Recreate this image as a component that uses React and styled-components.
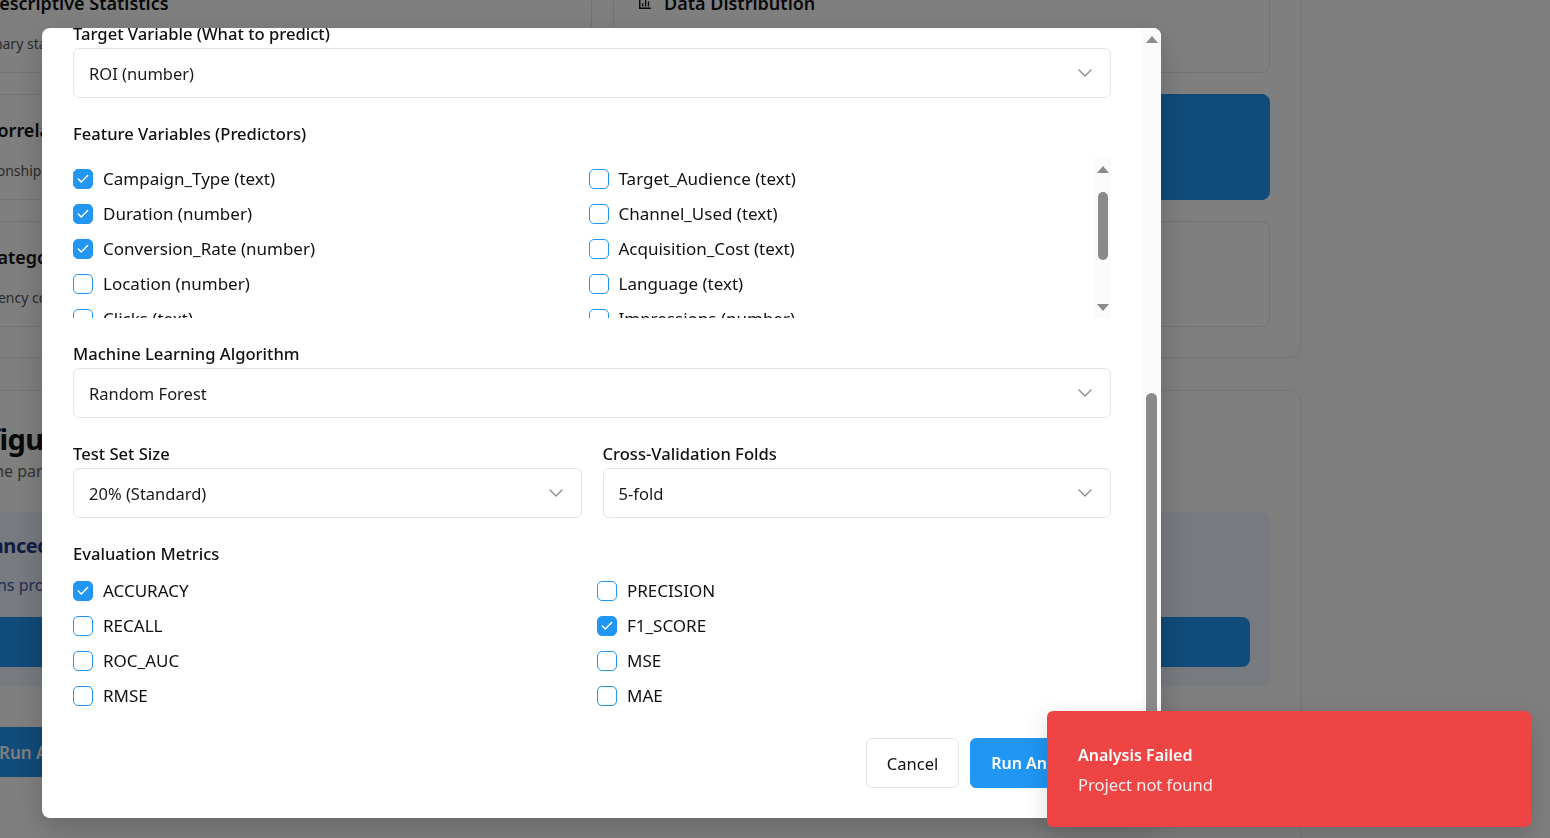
import React, { useLayoutEffect, useRef, useState } from "react";
import styled, { createGlobalStyle } from "styled-components";
import { Check, ChevronDown } from "lucide-react";

const GlobalStyle = createGlobalStyle`
  html, body {
    margin: 0;
    height: 100%;
    overflow: hidden;
    background: #fcfdfc;
    font-family: "Noto Sans", "Open Sans", Arial, sans-serif;
    color: #111;
  }
  * { box-sizing: border-box; }
`;

const BLUE = "#2196F3";
const ARROWS = 44; // two scroll arrow buttons of 22px

/* ---------- page behind the dialog ---------- */

const Page = styled.div`
  width: 1397px;
  /* the page is scrolled a little when the dialog opened */
  margin: -64px 0 0 -96px;
  display: flex;
  flex-direction: column;
  gap: 32px;
`;

const Panel = styled.section`
  background: #fff;
  border: 1px solid #eeeeee;
  border-radius: 12px;
  padding: 30px;
  box-shadow: 0 1px 3px rgba(0, 0, 0, 0.04);
`;

const CardGrid = styled.div`
  display: grid;
  grid-template-columns: 1fr 1fr;
  grid-auto-rows: 106px;
  gap: 21px;
`;

const TypeCard = styled.div`
  border: 1px solid ${(p) => (p.$filled ? BLUE : "#e8e8e8")};
  background: ${(p) => (p.$filled ? BLUE : "#fff")};
  color: ${(p) => (p.$filled ? "#fff" : "#111")};
  border-radius: 8px;
  padding: 23px 24px;
`;

const CardTitle = styled.div`
  display: flex;
  align-items: center;
  gap: 12px;
  font-size: 18px;
  font-weight: 600;
  line-height: 24px;
`;

const CardText = styled.div`
  margin-top: 18px;
  font-size: 14px;
  line-height: 22px;
  color: ${(p) => (p.$light ? "rgba(255,255,255,0.85)" : "#555")};
`;

const PageHeading = styled.h2`
  margin: 0;
  font-size: 29px;
  line-height: 36px;
  font-weight: 700;
  letter-spacing: -0.6px;
`;

const PageSub = styled.p`
  margin: 2px 0 0;
  font-size: 16px;
  line-height: 24px;
  color: #666;
`;

const AdvancedBox = styled.div`
  margin-top: 29px;
  background: #eef4fe;
  border-radius: 8px;
  padding: 20px;
`;

const AdvancedTitle = styled.div`
  font-size: 20px;
  line-height: 28px;
  font-weight: 700;
  color: #1e3a8a;
  letter-spacing: -0.4px;
`;

const AdvancedText = styled.div`
  margin-top: 14px;
  font-size: 16px;
  line-height: 22px;
  color: #3f5ea8;
`;

const BlueBlock = styled.button`
  display: flex;
  align-items: center;
  justify-content: center;
  gap: 12px;
  height: 50px;
  border: 0;
  border-radius: 8px;
  background: ${BLUE};
  color: #fff;
  font-family: inherit;
  font-size: 17px;
  font-weight: 600;
  width: ${(p) => (p.$full ? "100%" : "auto")};
  margin-top: ${(p) => p.$mt || 0}px;
  padding: 0 32px;
`;

const PanelFoot = styled.div`
  height: 60px;
`;

function ChartIcon() {
  return (
    <svg width="14" height="14" viewBox="0 0 24 24" fill="none" stroke="currentColor" strokeWidth="2.4" strokeLinecap="round">
      <path d="M3 3v18h18" />
      <path d="M8 17v-4M13 17V8M18 17v-7" />
    </svg>
  );
}

function PlayIcon() {
  return (
    <svg width="20" height="20" viewBox="0 0 24 24" fill="none" stroke="currentColor" strokeWidth="2" strokeLinejoin="round">
      <path d="M7 4l13 8-13 8z" />
    </svg>
  );
}

function Background() {
  return (
    <Page>
      <Panel>
        <CardGrid>
          <TypeCard>
            <CardTitle><ChartIcon />Descriptive Statistics</CardTitle>
            <CardText>Summary statistics for every column</CardText>
          </TypeCard>
          <TypeCard>
            <CardTitle><ChartIcon />Data Distribution</CardTitle>
            <CardText>Histograms and value spread of numeric fields</CardText>
          </TypeCard>
          <TypeCard>
            <CardTitle><ChartIcon />Correlation Analysis</CardTitle>
            <CardText>Relationships between variables</CardText>
          </TypeCard>
          <TypeCard $filled>
            <CardTitle><ChartIcon />Predictive Modeling</CardTitle>
            <CardText $light>Train a machine learning model on your data</CardText>
          </TypeCard>
          <TypeCard>
            <CardTitle><ChartIcon />Categorical Analysis</CardTitle>
            <CardText>Frequency counts and distributions</CardText>
          </TypeCard>
          <TypeCard>
            <CardTitle><ChartIcon />Time Series</CardTitle>
            <CardText>Trends over time</CardText>
          </TypeCard>
        </CardGrid>
      </Panel>
      <Panel>
        <PageHeading>Configure Parameters</PageHeading>
        <PageSub>Define the parameters for your analysis</PageSub>
        <AdvancedBox>
          <AdvancedTitle>Advanced Options</AdvancedTitle>
          <AdvancedText>Options professionals use for deeper statistical insight</AdvancedText>
          <BlueBlock $full $mt={21}>Open Advanced Settings</BlueBlock>
        </AdvancedBox>
        <BlueBlock $mt={40}><PlayIcon />Run Analysis</BlueBlock>
        <PanelFoot />
      </Panel>
    </Page>
  );
}

/* ---------- scroll rail (windows style, drawn by hand) ---------- */

const Rail = styled.div`
  width: ${(p) => p.$w}px;
  flex-shrink: 0;
  background: #fafafa;
  display: flex;
  flex-direction: column;
`;

const RailButton = styled.div`
  height: 22px;
  flex-shrink: 0;
  display: flex;
  align-items: center;
  justify-content: center;
  &::before {
    content: "";
    border-left: 6.5px solid transparent;
    border-right: 6.5px solid transparent;
    ${(p) => (p.$down ? "border-top" : "border-bottom")}: 7px solid #8a8a8a;
  }
`;

const RailTrack = styled.div`
  flex: 1;
  min-height: 0;
  display: flex;
  flex-direction: column;
  padding-left: ${(p) => p.$inset}px;
`;

const Thumb = styled.div`
  width: ${(p) => p.$w}px;
  flex-shrink: 0;
  background: #8a8a8a;
  border-radius: 6px;
`;

function ScrollRail({ width, inset, thumbWidth, thumb }) {
  return (
    <Rail $w={width}>
      <RailButton />
      <RailTrack $inset={inset}>
        <Thumb $w={thumbWidth} style={{ marginTop: thumb.top, height: thumb.height }} />
      </RailTrack>
      <RailButton $down />
    </Rail>
  );
}

function useScrollThumb(ref, start) {
  const [thumb, setThumb] = useState({ top: 0, height: 0 });
  useLayoutEffect(() => {
    const el = ref.current;
    if (!el) return undefined;
    el.scrollTop = start === "end" ? el.scrollHeight : start;
    const update = () => {
      const track = el.clientHeight - ARROWS;
      setThumb({
        top: (track * el.scrollTop) / el.scrollHeight,
        height: (track * el.clientHeight) / el.scrollHeight,
      });
    };
    update();
    el.addEventListener("scroll", update);
    return () => el.removeEventListener("scroll", update);
  }, [ref, start]);
  return thumb;
}

/* ---------- dialog ---------- */

const Overlay = styled.div`
  position: fixed;
  inset: 0;
  background: rgba(0, 0, 0, 0.5);
  display: flex;
  align-items: flex-start;
  padding: 28px 0 0 42px;
`;

const Dialog = styled.div`
  width: 1119px;
  height: 790px;
  background: #fff;
  border-radius: 8px;
  box-shadow: 0 10px 30px rgba(0, 0, 0, 0.2);
  overflow: hidden;
  display: flex;
`;

const DialogBody = styled.div`
  flex: 1;
  min-width: 0;
  overflow-y: auto;
  scrollbar-width: none;
  padding: 32px 31px 30px 31px;
  display: flex;
  flex-direction: column;
  gap: 24px;
  &::-webkit-scrollbar {
    display: none;
  }
`;

const Header = styled.div`
  display: flex;
  flex-direction: column;
  gap: 6px;
`;

const DialogTitle = styled.h2`
  margin: 0;
  font-size: 24px;
  line-height: 32px;
  font-weight: 700;
`;

const DialogDesc = styled.p`
  margin: 0;
  font-size: 16px;
  line-height: 24px;
  color: #666;
`;

const Field = styled.div`
  display: flex;
  flex-direction: column;
  min-width: 0;
`;

const Label = styled.div`
  font-size: 16.6px;
  line-height: 24px;
  font-weight: 500;
  color: #111;
  margin-bottom: ${(p) => (p.$group ? 12 : 2)}px;
`;

const SelectButton = styled.button`
  display: flex;
  align-items: center;
  justify-content: space-between;
  height: 50px;
  width: 100%;
  padding: 0 13px 0 15px;
  background: #fff;
  border: 1px solid #e4e4e4;
  border-radius: 6px;
  font-family: inherit;
  font-size: 16.5px;
  color: #1a1a1a;
  text-align: left;
  svg {
    color: #8a8a8a;
  }
`;

const TextInput = styled.div`
  height: ${(p) => p.$h || 50}px;
  border: 1px solid #e4e4e4;
  border-radius: 6px;
  padding: 13px 15px;
  font-size: 16.5px;
  color: #1a1a1a;
`;

const TwoCol = styled.div`
  display: grid;
  grid-template-columns: 1fr 1fr;
  gap: ${(p) => p.$gap || 21}px;
`;

const OptionTile = styled.div`
  height: 88px;
  border: 1px solid ${(p) => (p.$on ? BLUE : "#e4e4e4")};
  border-radius: 8px;
  padding: 16px;
  font-size: 16px;
  font-weight: 600;
`;

const CheckList = styled.div`
  display: grid;
  grid-template-columns: 1fr 1fr;
  grid-auto-rows: 26px;
  column-gap: 10px;
  row-gap: 9px;
`;

const ListFrame = styled.div`
  height: 160px;
  display: flex;
`;

const ScrollList = styled(CheckList)`
  flex: 1;
  min-width: 0;
  overflow-y: auto;
  scrollbar-width: none;
  &::-webkit-scrollbar {
    display: none;
  }
`;

const CheckRow = styled.label`
  display: flex;
  align-items: center;
  gap: 10px;
  font-size: 17px;
  line-height: 26px;
  color: #111;
  white-space: nowrap;
  cursor: pointer;
`;

const Box = styled.span`
  width: 20px;
  height: 20px;
  flex-shrink: 0;
  border-radius: 5px;
  border: 1px solid ${BLUE};
  background: ${(p) => (p.$on ? BLUE : "#fff")};
  color: #fff;
  display: flex;
  align-items: center;
  justify-content: center;
`;

const Footer = styled.div`
  margin-top: 5px;
  display: flex;
  justify-content: flex-end;
  gap: 11px;
`;

const FooterButton = styled.button`
  height: 50px;
  padding: 0 20px;
  border-radius: 6px;
  font-family: inherit;
  font-size: ${(p) => (p.$primary ? 16 : 16.5)}px;
  border: 1px solid ${(p) => (p.$primary ? BLUE : "#e4e4e4")};
  background: ${(p) => (p.$primary ? BLUE : "#fff")};
  color: ${(p) => (p.$primary ? "#fff" : "#111")};
  font-weight: ${(p) => (p.$primary ? 600 : 400)};
`;

const Toast = styled.div`
  position: fixed;
  right: 19px;
  bottom: 11px;
  width: 484px;
  background: #ef4444;
  color: #fff;
  border-radius: 6px;
  padding: 32px 31px 30px;
  box-shadow: 0 8px 24px rgba(0, 0, 0, 0.15);
`;

const ToastTitle = styled.div`
  font-size: 16px;
  line-height: 24px;
  font-weight: 600;
`;

const ToastText = styled.div`
  margin-top: 6px;
  font-size: 16.5px;
  line-height: 24px;
  opacity: 0.9;
`;

function Select({ value }) {
  return (
    <SelectButton type="button">
      <span>{value}</span>
      <ChevronDown size={24} strokeWidth={1.25} />
    </SelectButton>
  );
}

function CheckItem({ label, checked, onToggle }) {
  return (
    <CheckRow onClick={onToggle}>
      <Box $on={checked}>{checked && <Check size={14} strokeWidth={2.5} />}</Box>
      {label}
    </CheckRow>
  );
}

const FEATURES = [
  "Campaign_ID (number)", "Company (text)",
  "Campaign_Type (text)", "Target_Audience (text)",
  "Duration (number)", "Channel_Used (text)",
  "Conversion_Rate (number)", "Acquisition_Cost (text)",
  "Location (number)", "Language (text)",
  "Clicks (text)", "Impressions (number)",
  "Engagement_Score (number)", "Customer_Segment (text)",
  "Date (text)", "Spend (number)",
];

const METRICS = ["ACCURACY", "PRECISION", "RECALL", "F1_SCORE", "ROC_AUC", "MSE", "RMSE", "MAE"];

export default function App() {
  const bodyRef = useRef(null);
  const listRef = useRef(null);
  const [features, setFeatures] = useState(["Campaign_Type (text)", "Duration (number)", "Conversion_Rate (number)"]);
  const [metrics, setMetrics] = useState(["ACCURACY", "F1_SCORE"]);

  // dialog scrolled to the bottom, feature list scrolled by one row
  const bodyThumb = useScrollThumb(bodyRef, "end");
  const listThumb = useScrollThumb(listRef, 27);

  const toggle = (list, setList, name) =>
    setList(list.includes(name) ? list.filter((x) => x !== name) : [...list, name]);

  return (
    <>
      <GlobalStyle />
      <Background />
      <Overlay>
        <Dialog>
          <DialogBody ref={bodyRef}>
            <Header>
              <DialogTitle>Run Predictive Analysis</DialogTitle>
              <DialogDesc>Choose the target, the predictors and how the model is evaluated.</DialogDesc>
            </Header>
            <Field>
              <Label>Analysis Name</Label>
              <TextInput>Campaign ROI prediction</TextInput>
            </Field>
            <Field>
              <Label $group>Problem Type</Label>
              <TwoCol $gap={12}>
                <OptionTile $on>Regression</OptionTile>
                <OptionTile>Classification</OptionTile>
                <OptionTile>Clustering</OptionTile>
                <OptionTile>Time Series Forecast</OptionTile>
              </TwoCol>
            </Field>
            <Field>
              <Label>Notes</Label>
              <TextInput $h={152} />
            </Field>

            <Field>
              <Label>Target Variable (What to predict)</Label>
              <Select value="ROI (number)" />
            </Field>

            <Field>
              <Label $group>Feature Variables (Predictors)</Label>
              <ListFrame>
                <ScrollList ref={listRef}>
                  {FEATURES.map((f) => (
                    <CheckItem
                      key={f}
                      label={f}
                      checked={features.includes(f)}
                      onToggle={() => toggle(features, setFeatures, f)}
                    />
                  ))}
                </ScrollList>
                <ScrollRail width={17} inset={4} thumbWidth={10} thumb={listThumb} />
              </ListFrame>
            </Field>

            <Field>
              <Label>Machine Learning Algorithm</Label>
              <Select value="Random Forest" />
            </Field>

            <TwoCol>
              <Field>
                <Label>Test Set Size</Label>
                <Select value="20% (Standard)" />
              </Field>
              <Field>
                <Label>Cross-Validation Folds</Label>
                <Select value="5-fold" />
              </Field>
            </TwoCol>

            <Field>
              <Label $group>Evaluation Metrics</Label>
              <CheckList>
                {METRICS.map((m) => (
                  <CheckItem
                    key={m}
                    label={m}
                    checked={metrics.includes(m)}
                    onToggle={() => toggle(metrics, setMetrics, m)}
                  />
                ))}
              </CheckList>
            </Field>

            <Footer>
              <FooterButton type="button">Cancel</FooterButton>
              <FooterButton type="button" $primary>Run Analysis</FooterButton>
            </Footer>
          </DialogBody>
          <ScrollRail width={19} inset={4} thumbWidth={11} thumb={bodyThumb} />
        </Dialog>
      </Overlay>
      <Toast>
        <ToastTitle>Analysis Failed</ToastTitle>
        <ToastText>Project not found</ToastText>
      </Toast>
    </>
  );
}
